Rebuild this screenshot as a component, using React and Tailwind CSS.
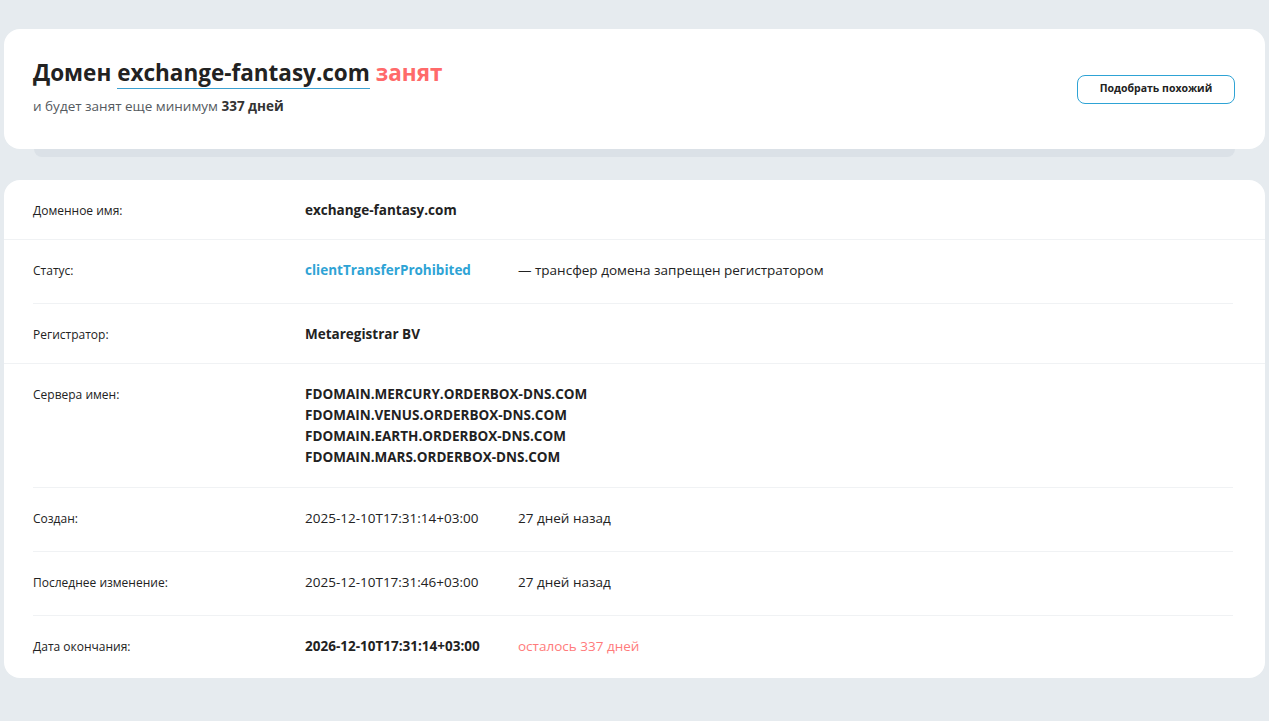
const rows = [
  { label: 'Доменное имя:', value: 'exchange-fantasy.com', bold: true, h: 'h-[60px]', full: true },
  {
    label: 'Статус:',
    value: 'clientTransferProhibited',
    link: true,
    extra: '— трансфер домена запрещен регистратором',
    h: 'h-[64px]',
  },
  { label: 'Регистратор:', value: 'Metaregistrar BV', bold: true, h: 'h-[60px]', full: true },
  {
    label: 'Сервера имен:',
    lines: [
      'FDOMAIN.MERCURY.ORDERBOX-DNS.COM',
      'FDOMAIN.VENUS.ORDERBOX-DNS.COM',
      'FDOMAIN.EARTH.ORDERBOX-DNS.COM',
      'FDOMAIN.MARS.ORDERBOX-DNS.COM',
    ],
    h: 'h-[124px]',
  },
  { label: 'Создан:', value: '2025-12-10T17:31:14+03:00', extra: '27 дней назад', h: 'h-[64px]' },
  { label: 'Последнее изменение:', value: '2025-12-10T17:31:46+03:00', extra: '27 дней назад', h: 'h-[64px]' },
  {
    label: 'Дата окончания:',
    value: '2026-12-10T17:31:14+03:00',
    bold: true,
    extra: 'осталось 337 дней',
    red: true,
    h: 'h-[62px]',
    last: true,
  },
];

const Row = ({ row }) => {
  const inner = (
    <div className="flex pt-5">
      <div className="w-[272px] shrink-0 text-[12px] leading-[21px] text-[#222]">{row.label}</div>
      {row.lines ? (
        <div className="flex flex-col text-[13.5px] leading-[21px] font-bold text-[#222]">
          {row.lines.map((l) => (
            <span key={l}>{l}</span>
          ))}
        </div>
      ) : (
        <>
          <div
            className={`${row.extra ? 'w-[213px] shrink-0' : ''} text-[13.5px] leading-[21px] ${
              row.link ? 'font-bold text-[#2ea3d5]' : row.bold ? 'font-bold text-[#222]' : 'text-[#222]'
            }`}
          >
            {row.value}
          </div>
          {row.extra && (
            <div className={`text-[13.5px] leading-[21px] ${row.red ? 'text-[#ff7b7b]' : 'text-[#222]'}`}>
              {row.extra}
            </div>
          )}
        </>
      )}
    </div>
  );

  if (row.full) {
    return <div className={`${row.h} pl-[29px] pr-[32px] border-b border-[#f0f2f4]`}>{inner}</div>;
  }
  return (
    <div className="pl-[29px] pr-[32px]">
      <div className={`${row.h} ${row.last ? '' : 'border-b border-[#f0f2f4]'}`}>{inner}</div>
    </div>
  );
};

export default function App() {
  return (
    <div
      className="min-h-[721px] bg-[#e6ebef] px-[4px] pt-[29px] pb-10"
      style={{ fontFamily: '"Open Sans", "Noto Sans", sans-serif' }}
    >
      {/* Header card */}
      <div className="h-[120px] rounded-[16px] bg-white flex items-center justify-between pl-[29px] pr-[30px]">
        <div className="pb-[5px]">
          <h1 className="text-[22.5px] leading-[30px] font-bold text-[#222]">
            Домен{' '}
            <span className="border-b border-[#3a9fd0]">exchange-fantasy.com</span>{' '}
            <span className="text-[#ff6a6a]">занят</span>
          </h1>
          <p className="mt-[8px] text-[13.5px] leading-[20px] text-[#555a60]">
            и будет занят еще минимум <span className="font-bold text-[#333]">337 дней</span>
          </p>
        </div>
        <button className="h-[29px] w-[158px] rounded-[8px] border border-[#2ea3d5] text-[10.5px] font-bold text-[#222] bg-white">
          Подобрать похожий
        </button>
      </div>
      <div className="mx-[30px] h-2 rounded-b-[8px] bg-[#dbe1e7]" />

      {/* Details card */}
      <div className="mt-[23px] rounded-[16px] bg-white">
        {rows.map((r) => (
          <Row key={r.label} row={r} />
        ))}
      </div>
    </div>
  );
}
